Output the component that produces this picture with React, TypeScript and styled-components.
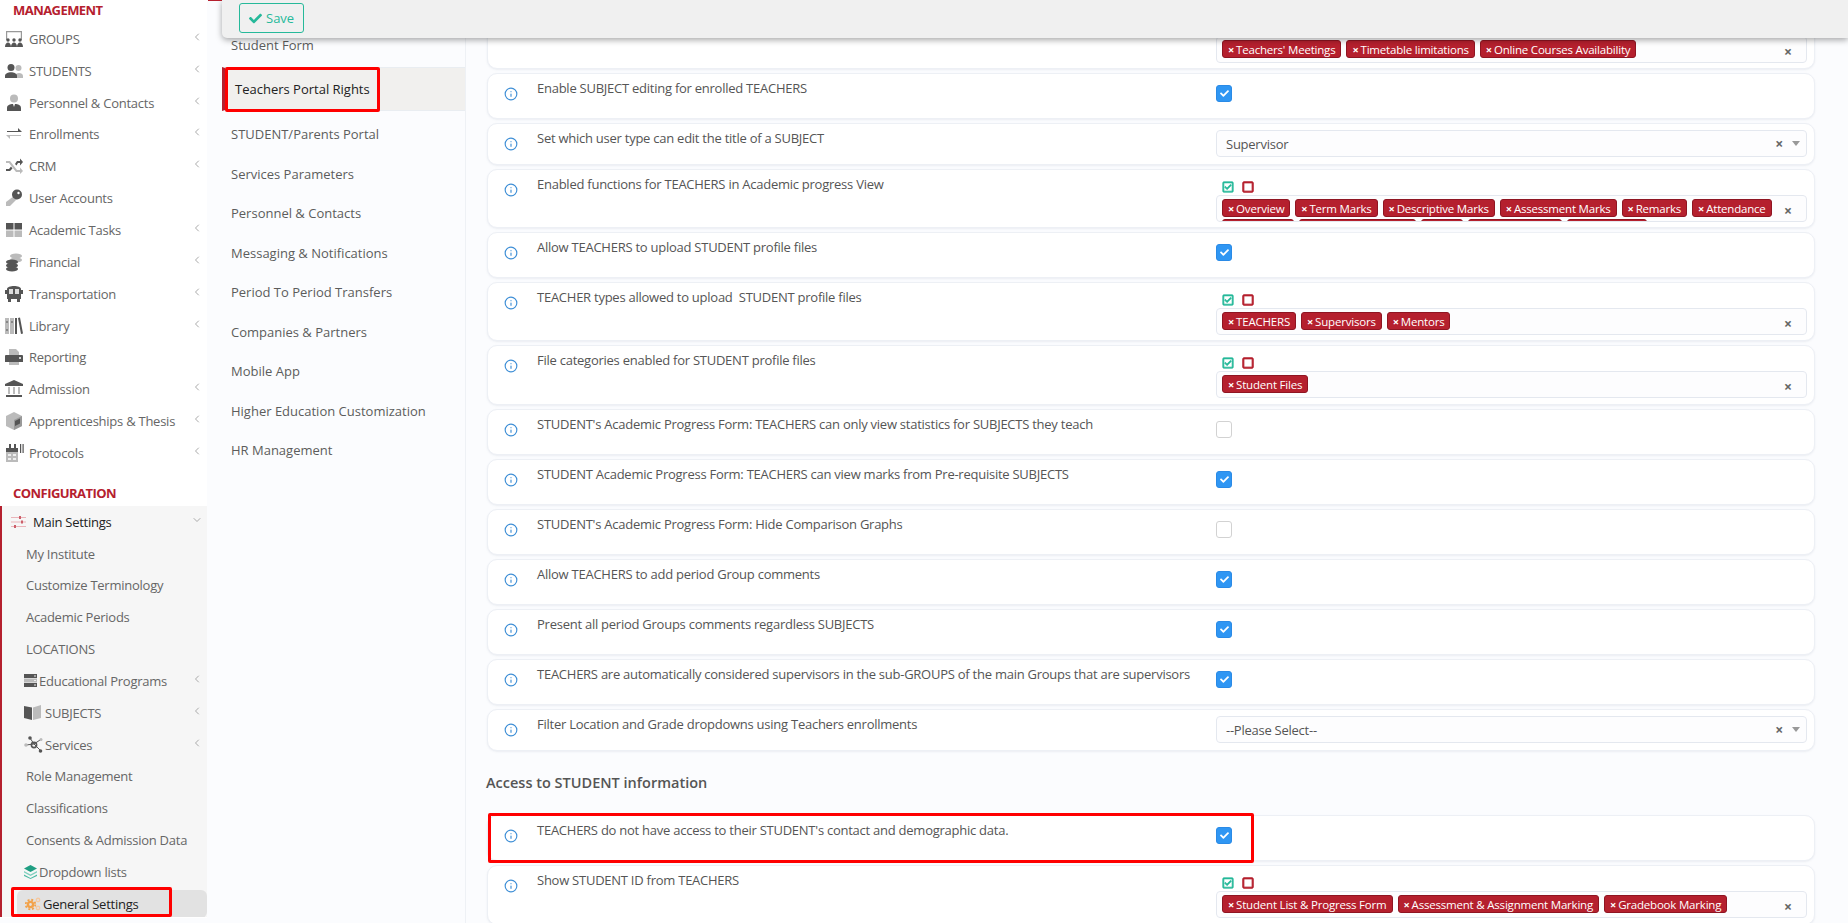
import React from "react";
import styled, { createGlobalStyle } from "styled-components";
import { ChevronDown, ChevronLeft, Info } from "lucide-react";
import { FaCheck, FaRegCheckSquare, FaRegSquare } from "react-icons/fa";

const DARK = "#555";
const LIGHT = "#bbb";
const BRAND = "#b5202e";

const GlobalStyle = createGlobalStyle`
  html, body {
    margin: 0;
    height: 100%;
    overflow: hidden;
    font-family: "Open Sans", "Liberation Sans", sans-serif;
    font-size: 13px;
    color: #555;
    background: #fbfcfe;
  }
  * { box-sizing: border-box; }
`;

const Shell = styled.div`
  position: relative;
  display: flex;
  height: 100vh;
  overflow: hidden;
`;

/* left menu */
const Sidebar = styled.nav`
  flex: 0 0 207px;
  background: #fff;
  height: 918px;
`;

const GroupTitle = styled.div<{ $height: number; $top: number }>`
  height: ${(p) => p.$height}px;
  padding: ${(p) => p.$top}px 0 0 13px;
  font-size: 13px;
  line-height: 18px;
  font-weight: 700;
  color: ${BRAND};
  letter-spacing: -0.55px;
`;

const MenuItem = styled.div`
  display: flex;
  align-items: center;
  height: 31.85px;
  padding: 0 4px 0 4px;
  color: #666;
  letter-spacing: -0.25px;
  white-space: nowrap;
`;

const MenuIcon = styled.span`
  display: flex;
  justify-content: center;
  width: 20px;
  margin-right: 5px;
`;

const Chevron = styled.span`
  display: flex;
  margin-left: auto;
  margin-bottom: 4px;
  color: #aaa;
`;

const ConfigBlock = styled.div`
  height: 411px;
  background: #f6f6f6;
  border-left: 2px solid ${BRAND};
  overflow: hidden;
`;

const MainItem = styled(MenuItem)`
  padding-left: 9px;
  color: #222;
`;

const SubItem = styled(MenuItem)`
  padding-left: 24px;
`;

const SubIconItem = styled(MenuItem)`
  padding-left: 22px;
`;

const SubIcon = styled.span<{ $width: number; $gap: number }>`
  display: flex;
  width: ${(p) => p.$width}px;
  margin-right: ${(p) => p.$gap}px;
`;

const ActiveItem = styled.div`
  display: flex;
  align-items: center;
  height: 28px;
  margin: 2px 0 0 15px;
  padding-left: 8px;
  background: #e2e2e2;
  border-radius: 6px;
  color: #222;
  letter-spacing: -0.25px;
`;

/* second column */
const SubMenu = styled.aside`
  flex: 0 0 259px;
  padding-top: 25.25px;
  border-right: 1px solid #eef1f5;
`;

const SubMenuItem = styled.div`
  display: flex;
  align-items: center;
  height: 39.5px;
  padding-left: 24px;
  color: #5c5c5c;
`;

const SubMenuActive = styled.div`
  display: flex;
  align-items: center;
  height: 44px;
  margin: 2px 0 3.5px 15px;
  padding-left: 10px;
  background: #f1f0ee;
  border-left: 3px solid ${BRAND};
  border-top: 1px solid #e9edf1;
  border-bottom: 1px solid #e9edf1;
  color: #222;
`;

/* settings */
const Content = styled.main`
  flex: 1;
  min-width: 0;
  padding: 7px 33px 0 21px;
`;

const RowList = styled.div`
  display: flex;
  flex-direction: column;
  gap: 4px;
`;

const Row = styled.div<{ $height: number }>`
  display: flex;
  height: ${(p) => p.$height}px;
  background: #fff;
  border: 1px solid #edf0f5;
  border-radius: 10px;
  box-shadow: 0 1px 2px rgba(120, 135, 160, 0.12);
  overflow: hidden;
`;

const InfoSlot = styled.div`
  display: flex;
  flex: 0 0 49px;
  justify-content: center;
  padding: 13px 4px 0 0;
  color: #3f8fd6;
`;

const Label = styled.div`
  flex: 0 0 679px;
  padding-top: 5px;
  line-height: 18px;
  letter-spacing: -0.25px;
  white-space: pre-wrap;
  color: #555;
`;

const Control = styled.div<{ $top: number }>`
  flex: 1;
  min-width: 0;
  padding: ${(p) => p.$top}px 7px 0 0;
`;

const CheckBox = styled.div<{ $on: boolean }>`
  display: flex;
  align-items: center;
  justify-content: center;
  width: 16px;
  height: 17px;
  border-radius: 3px;
  border: 1px solid ${(p) => (p.$on ? "#2a8ae6" : "#d2d2d2")};
  background: ${(p) => (p.$on ? "#2f96f3" : "#fff")};
  color: #fff;
`;

const SelectField = styled.div`
  display: flex;
  align-items: center;
  height: 27px;
  padding: 0 6px 0 9px;
  background: #fdfdfe;
  border: 1px solid #e4e8ef;
  border-radius: 4px;
  letter-spacing: -0.25px;
  color: #555;
`;

const SelectValue = styled.span`
  flex: 1;
`;

const ClearMark = styled.span`
  font-size: 14px;
  line-height: 16px;
  font-weight: 700;
  color: #666;
`;

const Caret = styled.span`
  width: 0;
  height: 0;
  margin-left: 9px;
  border-left: 4px solid transparent;
  border-right: 4px solid transparent;
  border-top: 5px solid #999;
`;

const QuickActions = styled.div`
  display: flex;
  align-items: center;
  gap: 8px;
  height: 11px;
  margin: 0 0 3px 6px;
  font-size: 12px;
`;

const CheckAll = styled.span`
  display: flex;
  color: #26b99a;
`;

const UncheckAll = styled.span`
  display: flex;
  color: ${BRAND};
`;

const TagField = styled.div`
  display: flex;
  height: 27px;
  padding: 3px 0 0 5px;
  background: #fdfdfe;
  border: 1px solid #e4e8ef;
  border-radius: 4px;
  overflow: hidden;
`;

const TagWrap = styled.div`
  display: flex;
  flex-wrap: wrap;
  gap: 2px 5px;
  align-content: flex-start;
  flex: 0 0 560px;
`;

const Tag = styled.span`
  display: inline-flex;
  align-items: center;
  height: 18px;
  padding: 0 5px;
  background: ${BRAND};
  border: 1px solid #8f1522;
  border-radius: 3px;
  font-size: 11.5px;
  letter-spacing: -0.2px;
  color: #fff;
  white-space: nowrap;
`;

const TagX = styled.b`
  margin-right: 2px;
  font-size: 11px;
`;

const BlankTag = styled(Tag)<{ $width: number }>`
  width: ${(p) => p.$width}px;
`;

const TagClear = styled(ClearMark)`
  margin: 4px 0 0 2px;
`;

const SectionTitle = styled.h4`
  margin: 0 0 0 -1px;
  height: 64px;
  padding: 22px 0 0 0;
  font-size: 14.5px;
  font-weight: 600;
  line-height: 20px;
  color: #555;
`;

/* things lying over the page */
const Toolbar = styled.div`
  position: absolute;
  top: 0;
  left: 222px;
  right: 0;
  height: 38px;
  padding: 3px 0 0 17px;
  background: #f0f0f0;
  border-bottom-left-radius: 5px;
  box-shadow: 0 2px 6px rgba(0, 0, 0, 0.35);
  &::before {
    content: "";
    position: absolute;
    top: 0;
    left: -14px;
    width: 14px;
    height: 1px;
    background: ${BRAND};
  }
`;

const SaveButton = styled.button`
  display: flex;
  align-items: center;
  gap: 4px;
  width: 65px;
  height: 30px;
  padding: 0 0 0 9px;
  background: transparent;
  border: 1px solid #26b99a;
  border-radius: 3px;
  font: inherit;
  color: #26b99a;
`;

const Highlight = styled.div<{ $x: number; $y: number; $w: number; $h: number }>`
  position: absolute;
  left: ${(p) => p.$x}px;
  top: ${(p) => p.$y}px;
  width: ${(p) => p.$w}px;
  height: ${(p) => p.$h}px;
  border: 3px solid #f00;
  border-radius: 2px;
  pointer-events: none;
`;

/* duotone menu icons */
const Svg = ({ w = 20, children }: { w?: number; children: React.ReactNode }) => (
  <svg width={w} height={w} viewBox="0 0 20 20">
    {children}
  </svg>
);

const GroupsIcon = () => (
  <Svg>
    <path d="M2 2h16v9h-1.200V3.200H3.200V11H2z" fill="#999" />
    <g fill={DARK}>
      <circle cx="4" cy="11" r="1.700" />
      <circle cx="10" cy="11" r="1.700" />
      <circle cx="16" cy="11" r="1.700" />
      <path d="M1 18c0-6 6-6 6 0zM7 18c0-6 6-6 6 0zM13 18c0-6 6-6 6 0z" />
    </g>
  </Svg>
);
const StudentsIcon = () => (
  <Svg>
    <circle cx="14.500" cy="7" r="3" fill={LIGHT} />
    <path d="M11 17v-2c0-4 8-4 8 0v2z" fill={LIGHT} />
    <circle cx="7" cy="6.500" r="3.500" fill={DARK} />
    <path d="M1 17v-2c0-5 12-5 12 0v2z" fill={DARK} />
  </Svg>
);
const PersonnelIcon = () => (
  <Svg>
    <circle cx="10" cy="5.500" r="4" fill={LIGHT} />
    <path d="M3 18v-3c0-3 3-4 6-4l1 3 1-3c3 0 6 1 6 4v3z" fill={DARK} />
  </Svg>
);
const EnrollIcon = () => (
  <Svg>
    <path d="M3 7h11V4l4 4H3z" fill={DARK} />
    <path d="M17 12H6v3l-4-4h15z" fill={LIGHT} />
  </Svg>
);
const CrmIcon = () => (
  <Svg>
    <path d="M2 5h4l7 9h3v-2.500l3 3.500-3 3v-2h-4L5 7H2z" fill={LIGHT} />
    <path d="M2 13h3l2-2.500 1.500 2L6 15H2zM11 8l2-3h3V2.500L19 6l-3 3.500V7h-2l-1.500 2.500z" fill={DARK} />
  </Svg>
);
const KeyIcon = () => (
  <Svg>
    <path d="M10 8l3 3-7 7H2v-4z" fill={LIGHT} />
    <circle cx="13" cy="6.500" r="5" fill={DARK} />
    <circle cx="14.500" cy="5" r="1.200" fill="#fff" />
  </Svg>
);
const TasksIcon = () => (
  <Svg>
    <path d="M2 3h7.500v6.500H2zM10.500 3H18v6.500h-7.500z" fill={DARK} />
    <path d="M2 10.500h7.500V17H2zM10.500 10.500H18V17h-7.500z" fill={LIGHT} />
  </Svg>
);
const FinancialIcon = () => (
  <Svg>
    <ellipse cx="12" cy="4" rx="6" ry="2.500" fill={LIGHT} />
    <ellipse cx="12" cy="8" rx="6" ry="2.500" fill={LIGHT} />
    <ellipse cx="8" cy="10" rx="6" ry="2.500" fill={DARK} />
    <ellipse cx="8" cy="13.500" rx="6" ry="2.500" fill={DARK} />
    <ellipse cx="8" cy="17" rx="6" ry="2.500" fill={DARK} />
  </Svg>
);
const BusIcon = () => (
  <Svg>
    <path d="M3 5c0-4 14-4 14 0v10H3z" fill={DARK} />
    <path d="M5 5h4v5H5zM11 5h4v5h-4z" fill="#ddd" />
    <path d="M1 6h2v4H1zM17 6h2v4h-2zM4 15h3v3H4zM13 15h3v3h-3z" fill={DARK} />
  </Svg>
);
const LibraryIcon = () => (
  <Svg>
    <path d="M1 2h4v16H1zM6 2h4v16H6z" fill={LIGHT} />
    <path d="M2 6h2M2 14h2M7 6h2" stroke={DARK} />
    <path d="M11 2h2v16h-2zM14 2l2-.500 3 16-2 .500z" fill={DARK} />
  </Svg>
);
const PrintIcon = () => (
  <Svg>
    <path d="M5 2h7l3 3v4H5zM5 14h10v4H5z" fill={LIGHT} />
    <path d="M2 8h16a1 1 0 011 1v6H1V9a1 1 0 011-1z" fill={DARK} />
    <circle cx="16" cy="11" r="1" fill="#fff" />
  </Svg>
);
const BankIcon = () => (
  <Svg>
    <path d="M10 1l9 4v2H1V5z" fill={DARK} />
    <path d="M4 8h2v7H4zM9 8h2v7H9zM14 8h2v7h-2z" fill={LIGHT} />
    <path d="M2 16h16v2H2z" fill={DARK} />
  </Svg>
);
const BoxIcon = () => (
  <Svg>
    <path d="M10 1l8 4v10l-8 4-8-4V5z" fill={LIGHT} />
    <path d="M10 9l8-4v10l-8 4z" fill="#999" />
    <path d="M11 10l5-2.500v5L11 15z" fill={DARK} />
  </Svg>
);
const ProtocolIcon = () => (
  <Svg>
    <path d="M2 6h12v13H2z" fill={LIGHT} />
    <path d="M2 5h12v4H2z" fill={DARK} />
    <path d="M5 1h2v4H5zM10 1h2v4h-2z" fill={DARK} />
    <path d="M16 1h1.200v9H16zM18.500 1h1.200v9h-1.200z" fill={DARK} />
    <path d="M4 11h3v2H4zM9 11h3v2H9zM4 15h3v2H4zM9 15h3v2H9z" fill="#eee" />
  </Svg>
);
const SlidersIcon = () => (
  <svg width="15" height="14" viewBox="0 0 15 14" fill="none">
    <path d="M0 2.500h15M0 7h15M0 11.500h15" stroke="#eab4b9" />
    <path d="M8 1h2v3H8zM10 5.500h2v3h-2zM3 10h2v3H3z" fill="#cc5f6a" />
  </svg>
);
const ServerIcon = () => (
  <svg width="13" height="13" viewBox="0 0 13 13">
    <path d="M0 0h13v4H0zM0 9h13v4H0z" fill={DARK} />
    <path d="M0 4.500h13v4H0z" fill={LIGHT} />
    <path d="M10 1.500h2v1h-2zM10 6h2v1h-2zM10 10.500h2v1h-2z" fill="#eee" />
  </svg>
);
const BookIcon = () => (
  <svg width="17" height="15" viewBox="0 0 17 15">
    <path d="M0 1l8 1.500V15L0 13z" fill={DARK} />
    <path d="M17 0L9 2.500V15l8-2z" fill={LIGHT} />
  </svg>
);
const NodesIcon = () => (
  <svg width="19" height="17" viewBox="0 0 19 17">
    <path d="M6 2l4 6 7 7M10 8l-8 1M10 8l6-4" stroke={DARK} fill="none" />
    <circle cx="10" cy="9" r="2.600" fill="none" stroke={DARK} strokeWidth="1.600" />
    <circle cx="6" cy="2" r="1.800" fill={DARK} />
    <circle cx="16.500" cy="15" r="1.800" fill={DARK} />
    <circle cx="2" cy="9" r="1.800" fill={LIGHT} />
    <circle cx="17" cy="3.500" r="1.500" fill={LIGHT} />
  </svg>
);
const LayersIcon = () => (
  <svg width="13" height="14" viewBox="0 0 13 14">
    <path d="M6.500 0L13 3.500 6.500 7 0 3.500z" fill="#1f9e82" />
    <path d="M0 6l6.500 3.500L13 6v1.500L6.500 11 0 7.500z" fill="#7fd0be" />
    <path d="M0 9.500L6.500 13 13 9.500V11l-6.500 3L0 11z" fill="#4cbba3" />
  </svg>
);
const GearsIcon = () => (
  <svg width="16" height="14" viewBox="0 0 16 14" fill="none">
    <circle cx="5.500" cy="7.500" r="2.600" stroke="#f2a24a" strokeWidth="2.400" />
    <circle cx="5.500" cy="7.500" r="4.800" stroke="#f2a24a" strokeWidth="1.800" strokeDasharray="2 1.800" />
    <circle cx="13" cy="3" r="1.700" stroke="#f5c9a0" strokeWidth="1.400" />
    <circle cx="13" cy="11" r="1.700" stroke="#f5c9a0" strokeWidth="1.400" />
  </svg>
);

const managementMenu: { label: string; icon: React.ReactNode; more: boolean }[] = [
  { label: "GROUPS", icon: <GroupsIcon />, more: true },
  { label: "STUDENTS", icon: <StudentsIcon />, more: true },
  { label: "Personnel & Contacts", icon: <PersonnelIcon />, more: true },
  { label: "Enrollments", icon: <EnrollIcon />, more: true },
  { label: "CRM", icon: <CrmIcon />, more: true },
  { label: "User Accounts", icon: <KeyIcon />, more: false },
  { label: "Academic Tasks", icon: <TasksIcon />, more: true },
  { label: "Financial", icon: <FinancialIcon />, more: true },
  { label: "Transportation", icon: <BusIcon />, more: true },
  { label: "Library", icon: <LibraryIcon />, more: true },
  { label: "Reporting", icon: <PrintIcon />, more: false },
  { label: "Admission", icon: <BankIcon />, more: true },
  { label: "Apprenticeships & Thesis", icon: <BoxIcon />, more: true },
  { label: "Protocols", icon: <ProtocolIcon />, more: true },
];

const subMenu = [
  "STUDENT/Parents Portal",
  "Services Parameters",
  "Personnel & Contacts",
  "Messaging & Notifications",
  "Period To Period Transfers",
  "Companies & Partners",
  "Mobile App",
  "Higher Education Customization",
  "HR Management",
];

type Setting = {
  label: string;
  height: number;
  checked?: boolean;
  select?: string;
  tags?: string[];
  clipped?: number[];
};

const settings: Setting[] = [
  { label: "Enable SUBJECT editing for enrolled TEACHERS", height: 46, checked: true },
  { label: "Set which user type can edit the title of a SUBJECT", height: 42, select: "Supervisor" },
  {
    label: "Enabled functions for TEACHERS in Academic progress View",
    height: 59,
    tags: ["Overview", "Term Marks", "Descriptive Marks", "Assessment Marks", "Remarks", "Attendance"],
    clipped: [72, 117, 42, 94, 80],
  },
  { label: "Allow TEACHERS to upload STUDENT profile files", height: 46, checked: true },
  {
    label: "TEACHER types allowed to upload  STUDENT profile files",
    height: 59,
    tags: ["TEACHERS", "Supervisors", "Mentors"],
  },
  { label: "File categories enabled for STUDENT profile files", height: 60, tags: ["Student Files"] },
  {
    label: "STUDENT's Academic Progress Form: TEACHERS can only view statistics for SUBJECTS they teach",
    height: 46,
    checked: false,
  },
  {
    label: "STUDENT Academic Progress Form: TEACHERS can view marks from Pre-requisite SUBJECTS",
    height: 46,
    checked: true,
  },
  { label: "STUDENT's Academic Progress Form: Hide Comparison Graphs", height: 46, checked: false },
  { label: "Allow TEACHERS to add period Group comments", height: 46, checked: true },
  { label: "Present all period Groups comments regardless SUBJECTS", height: 46, checked: true },
  {
    label: "TEACHERS are automatically considered supervisors in the sub-GROUPS of the main Groups that are supervisors",
    height: 46,
    checked: true,
  },
  { label: "Filter Location and Grade dropdowns using Teachers enrollments", height: 42, select: "--Please Select--" },
];

const accessSettings: Setting[] = [
  { label: "TEACHERS do not have access to their STUDENT's contact and demographic data.", height: 46, checked: true },
  {
    label: "Show STUDENT ID from TEACHERS",
    height: 60,
    tags: ["Student List & Progress Form", "Assessment & Assignment Marking", "Gradebook Marking"],
  },
];

const TagControl = ({ tags, clipped }: { tags: string[]; clipped?: number[] }) => (
  <TagField>
    <TagWrap>
      {tags.map((t) => (
        <Tag key={t}>
          <TagX>×</TagX>
          {t}
        </Tag>
      ))}
      {clipped?.map((w, i) => <BlankTag key={i} $width={w} />)}
    </TagWrap>
    <TagClear>×</TagClear>
  </TagField>
);

const SettingRow = ({ item }: { item: Setting }) => {
  const top = item.select ? 6 : 11;
  return (
    <Row $height={item.height}>
      <InfoSlot>
        <Info size={14} />
      </InfoSlot>
      <Label>{item.label}</Label>
      <Control $top={top}>
        {item.checked !== undefined && <CheckBox $on={item.checked}>{item.checked && <FaCheck size={9} />}</CheckBox>}
        {item.select && (
          <SelectField>
            <SelectValue>{item.select}</SelectValue>
            <ClearMark>×</ClearMark>
            <Caret />
          </SelectField>
        )}
        {item.tags && (
          <>
            <QuickActions>
              <CheckAll>
                <FaRegCheckSquare stroke="currentColor" strokeWidth={30} />
              </CheckAll>
              <UncheckAll>
                <FaRegSquare stroke="currentColor" strokeWidth={40} />
              </UncheckAll>
            </QuickActions>
            <TagControl tags={item.tags} clipped={item.clipped} />
          </>
        )}
      </Control>
    </Row>
  );
};

export default function App() {
  return (
    <Shell>
      <GlobalStyle />
      <Sidebar>
        <GroupTitle $height={23} $top={1}>
          MANAGEMENT
        </GroupTitle>
        {managementMenu.map((m) => (
          <MenuItem key={m.label}>
            <MenuIcon>{m.icon}</MenuIcon>
            {m.label}
            {m.more && (
              <Chevron>
                <ChevronLeft size={12} />
              </Chevron>
            )}
          </MenuItem>
        ))}
        <GroupTitle $height={37} $top={15}>
          CONFIGURATION
        </GroupTitle>
        <ConfigBlock>
          <MainItem>
            <SubIcon $width={15} $gap={7}>
              <SlidersIcon />
            </SubIcon>
            Main Settings
            <Chevron>
              <ChevronDown size={12} />
            </Chevron>
          </MainItem>
          <SubItem>My Institute</SubItem>
          <SubItem>Customize Terminology</SubItem>
          <SubItem>Academic Periods</SubItem>
          <SubItem>LOCATIONS</SubItem>
          <SubIconItem>
            <SubIcon $width={13} $gap={2}>
              <ServerIcon />
            </SubIcon>
            Educational Programs
            <Chevron>
              <ChevronLeft size={12} />
            </Chevron>
          </SubIconItem>
          <SubIconItem>
            <SubIcon $width={17} $gap={4}>
              <BookIcon />
            </SubIcon>
            SUBJECTS
            <Chevron>
              <ChevronLeft size={12} />
            </Chevron>
          </SubIconItem>
          <SubIconItem>
            <SubIcon $width={19} $gap={2}>
              <NodesIcon />
            </SubIcon>
            Services
            <Chevron>
              <ChevronLeft size={12} />
            </Chevron>
          </SubIconItem>
          <SubItem>Role Management</SubItem>
          <SubItem>Classifications</SubItem>
          <SubItem>Consents & Admission Data</SubItem>
          <SubIconItem>
            <SubIcon $width={13} $gap={2}>
              <LayersIcon />
            </SubIcon>
            Dropdown lists
          </SubIconItem>
          <ActiveItem>
            <SubIcon $width={16} $gap={2}>
              <GearsIcon />
            </SubIcon>
            General Settings
          </ActiveItem>
        </ConfigBlock>
      </Sidebar>

      <SubMenu>
        <SubMenuItem>Student Form</SubMenuItem>
        <SubMenuActive>Teachers Portal Rights</SubMenuActive>
        {subMenu.map((s) => (
          <SubMenuItem key={s}>{s}</SubMenuItem>
        ))}
      </SubMenu>

      <Content>
        <RowList>
          <Row $height={62}>
            <InfoSlot />
            <Label />
            <Control $top={28}>
              <TagControl tags={["Teachers' Meetings", "Timetable limitations", "Online Courses Availability"]} />
            </Control>
          </Row>
          {settings.map((s) => (
            <SettingRow key={s.label} item={s} />
          ))}
        </RowList>
        <SectionTitle>Access to STUDENT information</SectionTitle>
        <RowList>
          {accessSettings.map((s) => (
            <SettingRow key={s.label} item={s} />
          ))}
        </RowList>
      </Content>

      <Toolbar>
        <SaveButton>
          <FaCheck size={13} />
          Save
        </SaveButton>
      </Toolbar>

      <Highlight $x={225} $y={67} $w={155} $h={45} />
      <Highlight $x={11} $y={887} $w={161} $h={30} />
      <Highlight $x={488} $y={813} $w={766} $h={50} />
    </Shell>
  );
}
